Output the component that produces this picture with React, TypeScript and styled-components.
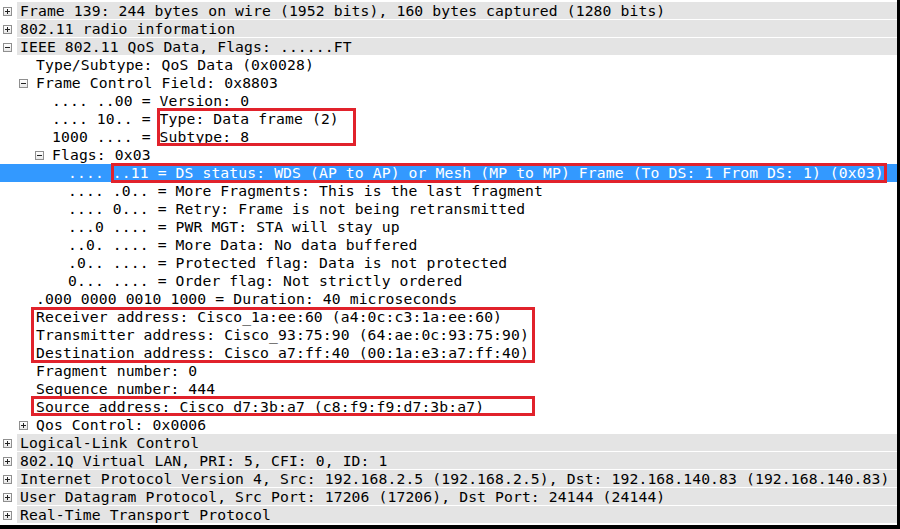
import React from 'react'
import styled, { createGlobalStyle } from 'styled-components'

type Node = {
  level: number
  text: string
  toggle?: '+' | '-'
  top?: boolean
  selected?: boolean
}

const NODES: Node[] = [
  { level: 0, toggle: '+', top: true, text: 'Frame 139: 244 bytes on wire (1952 bits), 160 bytes captured (1280 bits)' },
  { level: 0, toggle: '+', top: true, text: '802.11 radio information' },
  { level: 0, toggle: '-', top: true, text: 'IEEE 802.11 QoS Data, Flags: ......FT' },
  { level: 1, text: 'Type/Subtype: QoS Data (0x0028)' },
  { level: 1, toggle: '-', text: 'Frame Control Field: 0x8803' },
  { level: 2, text: '.... ..00 = Version: 0' },
  { level: 2, text: '.... 10.. = Type: Data frame (2)' },
  { level: 2, text: '1000 .... = Subtype: 8' },
  { level: 2, toggle: '-', text: 'Flags: 0x03' },
  { level: 3, selected: true, text: '.... ..11 = DS status: WDS (AP to AP) or Mesh (MP to MP) Frame (To DS: 1 From DS: 1) (0x03)' },
  { level: 3, text: '.... .0.. = More Fragments: This is the last fragment' },
  { level: 3, text: '.... 0... = Retry: Frame is not being retransmitted' },
  { level: 3, text: '...0 .... = PWR MGT: STA will stay up' },
  { level: 3, text: '..0. .... = More Data: No data buffered' },
  { level: 3, text: '.0.. .... = Protected flag: Data is not protected' },
  { level: 3, text: '0... .... = Order flag: Not strictly ordered' },
  { level: 1, text: '.000 0000 0010 1000 = Duration: 40 microseconds' },
  { level: 1, text: 'Receiver address: Cisco_1a:ee:60 (a4:0c:c3:1a:ee:60)' },
  { level: 1, text: 'Transmitter address: Cisco_93:75:90 (64:ae:0c:93:75:90)' },
  { level: 1, text: 'Destination address: Cisco_a7:ff:40 (00:1a:e3:a7:ff:40)' },
  { level: 1, text: 'Fragment number: 0' },
  { level: 1, text: 'Sequence number: 444' },
  { level: 1, text: 'Source address: Cisco_d7:3b:a7 (c8:f9:f9:d7:3b:a7)' },
  { level: 1, toggle: '+', text: 'Qos Control: 0x0006' },
  { level: 0, toggle: '+', top: true, text: 'Logical-Link Control' },
  { level: 0, toggle: '+', top: true, text: '802.1Q Virtual LAN, PRI: 5, CFI: 0, ID: 1' },
  { level: 0, toggle: '+', top: true, text: 'Internet Protocol Version 4, Src: 192.168.2.5 (192.168.2.5), Dst: 192.168.140.83 (192.168.140.83)' },
  { level: 0, toggle: '+', top: true, text: 'User Datagram Protocol, Src Port: 17206 (17206), Dst Port: 24144 (24144)' },
  { level: 0, toggle: '+', top: true, text: 'Real-Time Transport Protocol' },
]

// red annotation boxes drawn over the tree (panel coords)
const MARKS = [
  { x: 157, y: 108, w: 199, h: 38 },
  { x: 111, y: 163, w: 776, h: 20 },
  { x: 31, y: 307, w: 504, h: 56 },
  { x: 31, y: 396, w: 504, h: 20 },
]

const GlobalStyle = createGlobalStyle`
  html, body {
    margin: 0;
    padding: 0;
    background: #000;
  }
`

export default function App() {
  return (
    <>
      <GlobalStyle />
      <Panel>
        {NODES.map((node, i) => (
          <Row key={i} $level={node.level} $selected={node.selected}>
            <ToggleSlot>
              {node.toggle && <Toggle>{node.toggle === '+' ? <Plus /> : <Minus />}</Toggle>}
            </ToggleSlot>
            <Label $top={node.top}>{node.text}</Label>
          </Row>
        ))}
        {MARKS.map((m, i) => (
          <Mark key={i} $x={m.x} $y={m.y} $w={m.w} $h={m.h} />
        ))}
      </Panel>
    </>
  )
}

const Panel = styled.div`
  position: relative;
  width: 897px;
  height: 525px;
  box-sizing: border-box;
  padding-top: 2px;
  background: #fff;
  overflow: hidden;
  font-family: 'DejaVu Sans Mono', 'Liberation Mono', monospace;
  font-size: 14.7px;
  letter-spacing: 0.12px;
  color: #000;
`

const Row = styled.div<{ $level: number; $selected?: boolean }>`
  display: flex;
  align-items: stretch;
  height: 18px;
  line-height: 18px;
  padding-left: ${(p) => 3 + p.$level * 16}px;
  white-space: pre;
  background: ${(p) => (p.$selected ? '#3399ff' : 'transparent')};
  color: ${(p) => (p.$selected ? '#fff' : '#000')};
`

const ToggleSlot = styled.div`
  width: 14px;
  flex: none;
  display: flex;
  align-items: center;
`

const Toggle = styled.div`
  position: relative;
  width: 9px;
  height: 9px;
  box-sizing: border-box;
  border: 1px solid #8f8f8f;
  background: linear-gradient(#ffffff, #e8e8e8);
`

const Minus = styled.span`
  position: absolute;
  left: 1px;
  top: 3px;
  width: 5px;
  height: 1px;
  background: #222;
`

const Plus = styled(Minus)`
  &::after {
    content: '';
    position: absolute;
    left: 2px;
    top: -2px;
    width: 1px;
    height: 5px;
    background: #222;
  }
`

const Label = styled.div<{ $top?: boolean }>`
  flex: 1;
  padding-left: 3px;
  box-sizing: border-box;
  background: ${(p) => (p.$top ? '#e4e4e4' : 'transparent')};
  border-bottom: ${(p) => (p.$top ? '1px solid #fff' : 'none')};
  line-height: ${(p) => (p.$top ? '17px' : '18px')};
`

const Mark = styled.div<{ $x: number; $y: number; $w: number; $h: number }>`
  position: absolute;
  left: ${(p) => p.$x}px;
  top: ${(p) => p.$y}px;
  width: ${(p) => p.$w}px;
  height: ${(p) => p.$h}px;
  box-sizing: border-box;
  border: 3px solid #e1222b;
  pointer-events: none;
`
